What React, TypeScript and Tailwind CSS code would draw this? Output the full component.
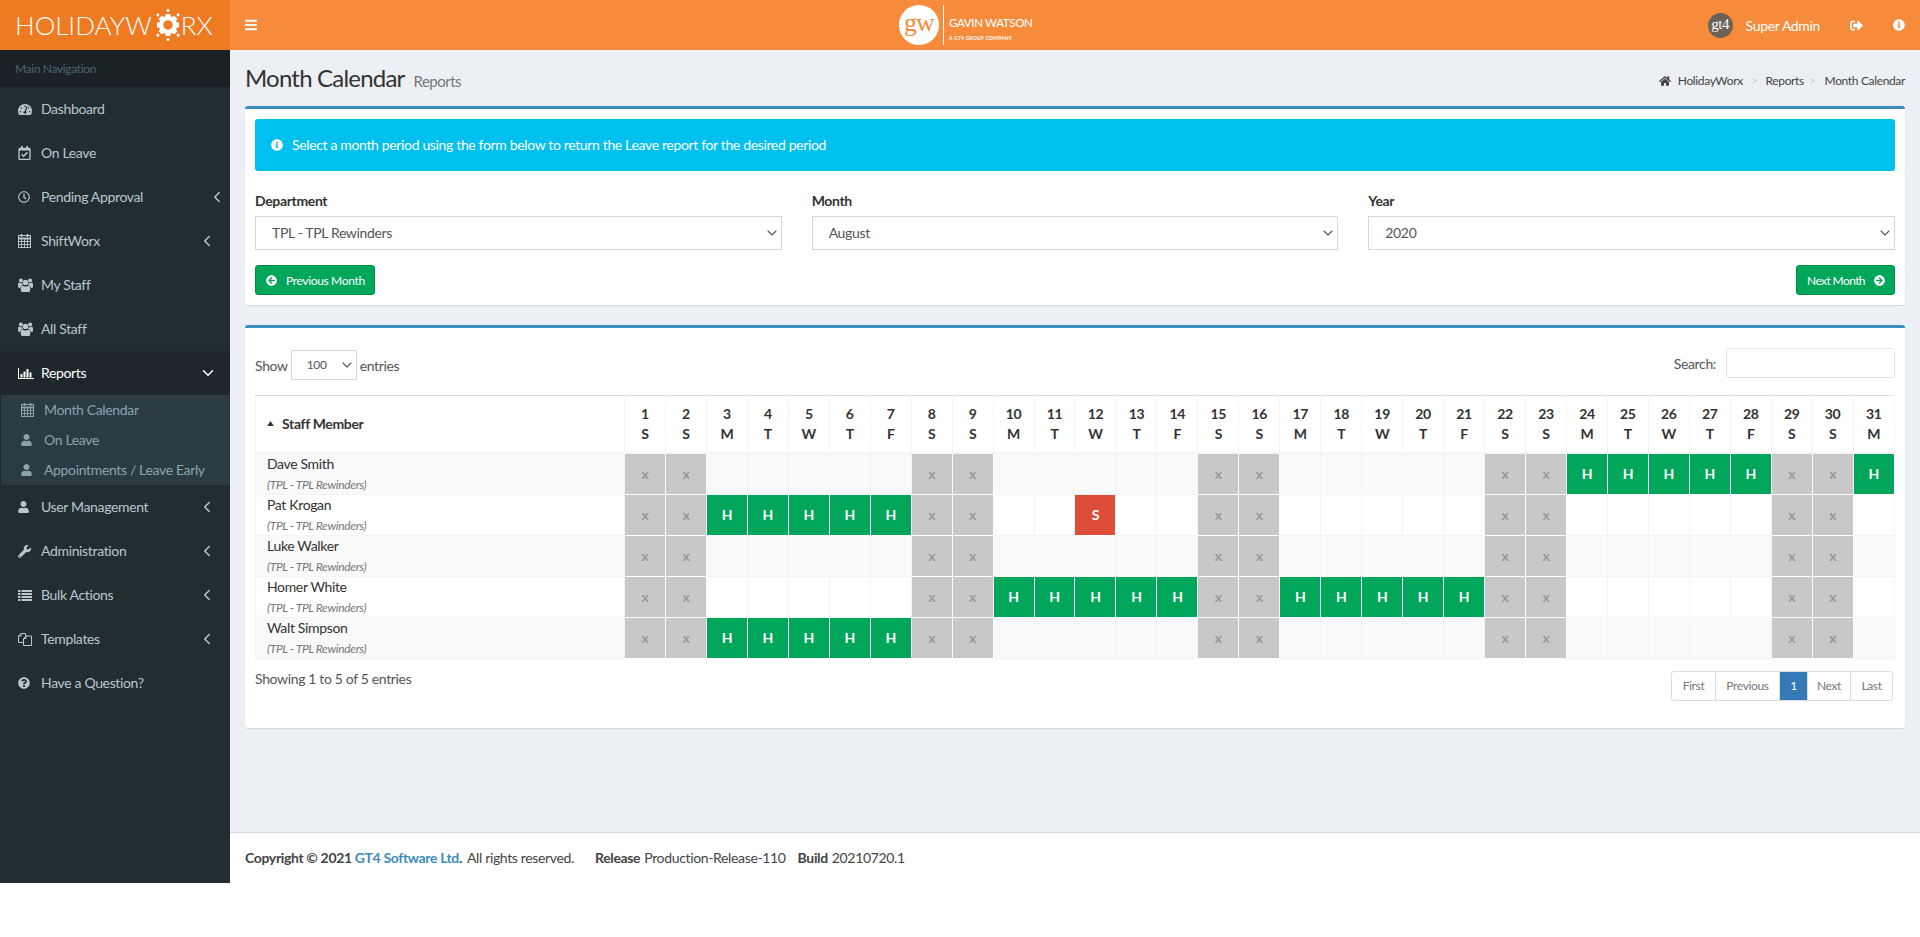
import type { ReactNode } from "react";
import { ChevronDown, ChevronLeft } from "lucide-react";
import {
  FaArrowCircleLeft,
  FaArrowCircleRight,
  FaBars,
  FaHome,
  FaInfoCircle,
  FaQuestionCircle,
  FaRegCalendarCheck,
  FaRegClock,
  FaSignOutAlt,
  FaTachometerAlt,
  FaUser,
  FaWrench,
} from "react-icons/fa";

type NavItem = {
  label: string;
  icon: ReactNode;
  chevronClass?: string;
};

function CalendarIcon() {
  return (
    <svg viewBox="0 0 13 14" className="h-[14px] w-[13px]" fill="none" stroke="currentColor" strokeWidth="1">
      <rect x="0.5" y="1.5" width="12" height="12" />
      <path d="M0 4.5h13" strokeWidth="2" />
      <path d="M0.5 7.5h12M0.5 10.5h12M3.5 5v8M6.5 5v8M9.5 5v8" strokeWidth="0.9" />
      <path d="M3.5 0v3M9.5 0v3" strokeWidth="1.6" />
    </svg>
  );
}

function UsersIcon() {
  return (
    <svg viewBox="0 0 15 14" className="h-[14px] w-[15px]" fill="currentColor">
      <circle cx="7.5" cy="4.4" r="2.7" />
      <circle cx="2.9" cy="2.6" r="2" />
      <circle cx="12.1" cy="2.6" r="2" />
      <path d="M4.4 7.6c1 .7 2 1 3.1 1s2.100-.3 3.100-1c1.300.4 1.700 1.700 1.700 3.800 0 1.600-.9 2.600-2.200 2.600H4.900c-1.300 0-2.200-1-2.200-2.600 0-2.100.4-3.400 1.700-3.800z" />
      <path d="M0 6.800c0-1 .2-1.900 1-2.300.6.5 1.300.7 1.900.7.500 0 .9-.1 1.300-.3.100.7.400 1.300.8 1.800-1.500.5-2.700 1.600-2.900 3.300H1.300C.5 9.700 0 9 0 8.200z" />
      <path d="M15 6.800c0-1-.2-1.900-1-2.300-.6.5-1.300.7-1.900.7-.5 0-.9-.1-1.300-.3-.1.7-.4 1.300-.8 1.800 1.500.5 2.700 1.600 2.900 3.300h.8c.8 0 1.300-.7 1.300-1.500z" />
    </svg>
  );
}

function ChartIcon() {
  return (
    <svg viewBox="0 0 16 11" className="h-[11px] w-[16px]" fill="currentColor">
      <rect x="0" y="0" width="1" height="11" />
      <rect x="0" y="10" width="16" height="1" />
      <rect x="2.500" y="6" width="2" height="3.500" />
      <rect x="5.500" y="3.500" width="2" height="6" />
      <rect x="8.500" y="1" width="2" height="8.500" />
      <rect x="11.500" y="4.500" width="2" height="5" />
    </svg>
  );
}

function ListIcon() {
  return (
    <svg viewBox="0 0 14 11" className="h-[11px] w-[14px]" fill="currentColor">
      {[0, 3, 6, 9].map((y) => (
        <g key={y}>
          <rect x="0" y={y} width="2.500" height="2" />
          <rect x="3.500" y={y} width="10.500" height="2" />
        </g>
      ))}
    </svg>
  );
}

function FilesIcon() {
  return (
    <svg viewBox="0 0 14 13" className="h-[13px] w-[14px]" fill="none" stroke="currentColor" strokeWidth="1">
      <path d="M5.500 9.500H.5V3L3 .5h4.500V3" />
      <path d="M3 .5V3H.5" />
      <path d="M5.500 12.500V5.500L8 3h5.500v9.500z" />
      <path d="M8 3v2.500H5.500" />
    </svg>
  );
}

const topNav: NavItem[] = [
  { label: "Dashboard", icon: <FaTachometerAlt className="h-[13px] w-[14px]" /> },
  { label: "On Leave", icon: <FaRegCalendarCheck className="h-[14px] w-[13px]" /> },
  { label: "Pending Approval", icon: <FaRegClock className="h-[12px] w-[12px]" />, chevronClass: "mr-[4px]" },
  { label: "ShiftWorx", icon: <CalendarIcon />, chevronClass: "mr-[14px]" },
  { label: "My Staff", icon: <UsersIcon /> },
  { label: "All Staff", icon: <UsersIcon /> },
];

const bottomNav: NavItem[] = [
  { label: "User Management", icon: <FaUser className="h-[12px] w-[11px]" />, chevronClass: "mr-[14px]" },
  { label: "Administration", icon: <FaWrench className="h-[13px] w-[13px]" />, chevronClass: "mr-[14px]" },
  { label: "Bulk Actions", icon: <ListIcon />, chevronClass: "mr-[14px]" },
  { label: "Templates", icon: <FilesIcon />, chevronClass: "mr-[14px]" },
  { label: "Have a Question?", icon: <FaQuestionCircle className="h-[12px] w-[12px]" /> },
];

const subNav: { label: string; icon: ReactNode }[] = [
  { label: "Month Calendar", icon: <CalendarIcon /> },
  { label: "On Leave", icon: <FaUser className="h-[12px] w-[11px]" /> },
  { label: "Appointments / Leave Early", icon: <FaUser className="h-[12px] w-[11px]" /> },
];

const weekdays = ["S", "S", "M", "T", "W", "T", "F"];
const days = Array.from({ length: 31 }, (_, i) => ({
  num: i + 1,
  letter: weekdays[i % 7],
  weekend: i % 7 < 2,
}));

const range = (from: number, to: number) => Array.from({ length: to - from + 1 }, (_, i) => from + i);

const staff: { name: string; holidays: number[]; sick: number[] }[] = [
  { name: "Dave Smith", holidays: [...range(24, 28), 31], sick: [] },
  { name: "Pat Krogan", holidays: range(3, 7), sick: [12] },
  { name: "Luke Walker", holidays: [], sick: [] },
  { name: "Homer White", holidays: [...range(10, 14), ...range(17, 21)], sick: [] },
  { name: "Walt Simpson", holidays: range(3, 7), sick: [] },
];

function Logo() {
  const teeth = [0, 45, 90, 135, 180, 225, 270, 315];
  return (
    <div className="flex h-[50px] w-[230px] shrink-0 items-center bg-[#ee7a21] pl-[15px] text-[26px] font-light leading-none tracking-normal text-white">
      <span>HOLIDAYW</span>
      <svg viewBox="0 0 32 32" className="mr-[-3px] h-[32px] w-[32px] shrink-0" fill="white">
        {teeth.map((deg) => (
          <g key={deg} transform={`rotate(${deg} 16 16)`}>
            <rect x="13.5" y="5" width="5" height="5" />
            {deg % 90 !== 0 || deg % 180 === 0 ? <circle cx="16" cy="1.6" r="1.5" /> : null}
          </g>
        ))}
        <circle cx="16" cy="16" r="7" fill="none" stroke="white" strokeWidth="4.5" />
      </svg>
      <span>RX</span>
    </div>
  );
}

function Navbar() {
  return (
    <div className="flex h-[50px] min-w-0 flex-1 items-center bg-[#f68b3b] text-white">
      <FaBars className="ml-[15px] h-[14px] w-[12px]" />
      <div className="ml-[642px] flex items-center">
        <div className="flex h-[40px] w-[40px] items-center justify-center rounded-full bg-white pb-[5px] font-['Liberation_Serif',serif] text-[26px] font-light leading-none tracking-[-1px] text-[#f68b3b]">
          gw
        </div>
        <div className="ml-[4px] h-[40px] w-px bg-white" />
        <div className="ml-[5px] flex h-[40px] flex-col pt-[11px]">
          <span className="text-[11.5px] font-medium uppercase leading-[14px] tracking-[-0.35px]">Gavin Watson</span>
          <span className="mt-[5px] text-[5px] font-bold uppercase leading-[6px] tracking-[0.2px]">A GT4 Group Company</span>
        </div>
      </div>
      <div className="ml-auto flex items-center pr-[15px]">
        <div className="flex h-[25px] w-[25px] items-center justify-center rounded-full bg-[#6b6157] pb-px font-['Liberation_Serif',serif] text-[15px] leading-none tracking-[-0.5px]">
          gt4
        </div>
        <span className="ml-[13px] text-[14px]">Super Admin</span>
        <FaSignOutAlt className="ml-[30px] h-[13px] w-[13px]" />
        <FaInfoCircle className="ml-[30px] h-[12px] w-[12px]" />
      </div>
    </div>
  );
}

function SideLink({ item }: { item: NavItem }) {
  return (
    <a className="flex h-[44px] items-center pl-[18px] text-[14px] text-[#b8c7ce]">
      <span className="flex w-[23px] shrink-0 items-center">{item.icon}</span>
      <span className="pb-[2px]">{item.label}</span>
      {item.chevronClass ? <ChevronLeft className={`ml-auto h-[18px] w-[18px] ${item.chevronClass}`} strokeWidth={2} /> : null}
    </a>
  );
}

function Sidebar() {
  return (
    <aside className="w-[230px] shrink-0 bg-[#222d32]">
      <div className="flex h-[37px] items-center bg-[#1a2226] pl-[15px] text-[12px] text-[#4b646f]">Main Navigation</div>
      {topNav.map((item) => (
        <SideLink key={item.label} item={item} />
      ))}
      <a className="flex h-[44px] items-center bg-[#1e282c] pl-[18px] text-[14px] text-white">
        <span className="flex w-[23px] shrink-0 items-center">
          <ChartIcon />
        </span>
        <span className="pb-[2px]">Reports</span>
        <ChevronDown className="ml-auto mr-[13px] h-[18px] w-[18px]" strokeWidth={2} />
      </a>
      <div className="h-[90px] border-l border-[#1e282c] bg-[#2c3b41]">
        {subNav.map((item) => (
          <a key={item.label} className="flex h-[30px] items-center pl-[20px] text-[14px] text-[#8aa4af]">
            <span className="flex w-[23px] shrink-0 items-center">{item.icon}</span>
            <span className="pb-[1px]">{item.label}</span>
          </a>
        ))}
      </div>
      {bottomNav.map((item) => (
        <SideLink key={item.label} item={item} />
      ))}
    </aside>
  );
}

function Box({ className, children }: { className: string; children: ReactNode }) {
  return (
    <section className={`rounded-[3px] border-t-[3px] border-[#3c8dbc] bg-white shadow-[0_1px_1px_rgba(0,0,0,0.1)] ${className}`}>
      {children}
    </section>
  );
}

function Field({ label, value, options }: { label: string; value: string; options: string[] }) {
  return (
    <div>
      <label className="mb-[5px] block h-[20px] text-[14px] font-bold leading-[20px] text-[#333]">{label}</label>
      <div className="relative">
        <select
          defaultValue={value}
          className="h-[34px] w-full appearance-none border border-[#d2d6de] bg-white pb-[2px] pl-[16px] text-[14px] text-[#555]"
        >
          {options.map((o) => (
            <option key={o}>{o}</option>
          ))}
        </select>
        <ChevronDown className="pointer-events-none absolute right-[2px] top-[9px] h-[16px] w-[16px] text-[#555]" strokeWidth={1.7} />
      </div>
    </div>
  );
}

function FilterBox() {
  return (
    <Box className="h-[199px] px-[10px] pt-[10px]">
      <div className="flex h-[52px] items-center rounded-[3px] bg-[#00c0ef] pl-[16px] text-[14px] text-white">
        <FaInfoCircle className="h-[12px] w-[12px]" />
        <span className="ml-[9px] pb-[2px]">Select a month period using the form below to return the Leave report for the desired period</span>
      </div>
      <div className="mt-[20px] grid grid-cols-3 gap-x-[30px]">
        <Field label="Department" value="TPL - TPL Rewinders" options={["TPL - TPL Rewinders"]} />
        <Field label="Month" value="August" options={["July", "August", "September"]} />
        <Field label="Year" value="2020" options={["2019", "2020", "2021"]} />
      </div>
      <div className="mt-[15px] flex justify-between">
        <button className="flex h-[30px] w-[120px] items-center rounded-[3px] border border-[#008d4c] bg-[#00a65a] pl-[10px] text-[12px] text-white">
          <FaArrowCircleLeft className="h-[11px] w-[11px]" />
          <span className="ml-[9px] pt-px">Previous Month</span>
        </button>
        <button className="flex h-[30px] w-[99px] items-center rounded-[3px] border border-[#008d4c] bg-[#00a65a] pl-[10px] text-[12px] text-white">
          <span className="w-[57px] whitespace-nowrap pt-px tracking-[-0.6px]">Next Month</span>
          <FaArrowCircleRight className="ml-[10px] h-[11px] w-[11px]" />
        </button>
      </div>
    </Box>
  );
}

function DayCell({ day, row }: { day: (typeof days)[number]; row: (typeof staff)[number] }) {
  if (row.holidays.includes(day.num)) {
    return <td className="border border-white bg-[#00a65a] text-center text-[14px] font-bold text-white">H</td>;
  }
  if (row.sick.includes(day.num)) {
    return <td className="border border-white bg-[#dd4b39] text-center text-[14px] font-bold text-white">S</td>;
  }
  if (day.weekend) {
    return <td className="border border-white bg-[#c8c8c8] text-center text-[14px] font-bold text-[#999]">x</td>;
  }
  return <td className="border border-[#f4f4f4]" />;
}

function CalendarTable() {
  return (
    <table className="w-[1640px] table-fixed border-collapse text-[14px] text-[#333]">
      <thead>
        <tr className="h-[57px]">
          <th className="w-[369px] border border-[#f4f4f4] border-t-[#ddd] pl-[11px] text-left font-bold">
            <span className="flex items-center">
              <svg viewBox="0 0 8 6" className="h-[5px] w-[7px]" fill="#333">
                <polygon points="4,0 8,6 0,6" />
              </svg>
              <span className="ml-[8px]">Staff Member</span>
            </span>
          </th>
          {days.map((d) => (
            <th key={d.num} className="border border-[#f4f4f4] border-t-[#ddd] text-center font-bold leading-[20px]">
              {d.num}
              <br />
              {d.letter}
            </th>
          ))}
        </tr>
      </thead>
      <tbody className="border-t-2 border-[#f4f4f4]">
        {staff.map((row, i) => (
          <tr key={row.name} className={i % 2 === 0 ? "h-[41px] bg-[#f9f9f9]" : "h-[41px] bg-white"}>
            <td className="border border-[#f4f4f4] pl-[11px] align-middle">
              <div className="leading-[20px]">{row.name}</div>
              <div className="h-[20px] text-[12px] italic leading-[22px] text-[#777]">(TPL - TPL Rewinders)</div>
            </td>
            {days.map((d) => (
              <DayCell key={d.num} day={d} row={row} />
            ))}
          </tr>
        ))}
      </tbody>
    </table>
  );
}

function Pagination() {
  const pageClass = "flex h-[30px] items-center border border-[#ddd] text-[12px] -ml-px";
  return (
    <div className="flex text-[#777]">
      <a className={`${pageClass} ml-0 w-[45px] justify-center rounded-l-[3px]`}>First</a>
      <a className={`${pageClass} w-[65px] justify-center`}>Previous</a>
      <a className={`${pageClass} w-[29px] justify-center border-[#337ab7] bg-[#337ab7] text-white`}>1</a>
      <a className={`${pageClass} w-[44px] justify-center`}>Next</a>
      <a className={`${pageClass} w-[43px] justify-center rounded-r-[3px]`}>Last</a>
    </div>
  );
}

function ReportBox() {
  return (
    <Box className="mt-[20px] h-[403px] px-[10px] pt-[20px]">
      <div className="flex h-[47px] items-start justify-between text-[14px] text-[#333]">
        <label className="mt-[2px] flex items-center text-[#555]">
          <span>Show</span>
          <div className="relative mx-[3px]">
            <select
              defaultValue="100"
              className="block h-[30px] w-[66px] appearance-none border border-[#d2d6de] bg-white pl-[15px] text-[12px] text-[#555]"
            >
              <option>10</option>
              <option>25</option>
              <option>50</option>
              <option>100</option>
            </select>
            <ChevronDown className="pointer-events-none absolute right-[2px] top-[7px] h-[16px] w-[16px] text-[#555]" strokeWidth={1.7} />
          </div>
          <span>entries</span>
        </label>
        <label className="flex items-center">
          <span className="text-[#555]">Search:</span>
          <input className="ml-[10px] h-[30px] w-[169px] rounded-[3px] border border-[#e4e4e4] bg-white" />
        </label>
      </div>
      <CalendarTable />
      <div className="mt-[12px] flex items-start justify-between pr-[2px] text-[14px] text-[#555]">
        <span className="mt-[-3px]">Showing 1 to 5 of 5 entries</span>
        <Pagination />
      </div>
    </Box>
  );
}

function Breadcrumb() {
  return (
    <ol className="mt-[6px] flex items-center text-[12px] text-[#444]">
      <li className="flex items-center">
        <FaHome className="mr-[7px] h-[12px] w-[12px]" />
        HolidayWorx
      </li>
      <li className="ml-[8px] text-[#ccc]">&gt;</li>
      <li className="ml-[8px]">Reports</li>
      <li className="ml-[5px] text-[#ccc]">&gt;</li>
      <li className="ml-[9px]">Month Calendar</li>
    </ol>
  );
}

export default function App() {
  return (
    <div className="font-['Lato',sans-serif] tracking-[-0.35px]">
      <header className="flex">
        <Logo />
        <Navbar />
      </header>
      <div className="flex h-[833px]">
        <Sidebar />
        <main className="flex min-w-0 flex-1 flex-col">
          <div className="flex-1 bg-[#ecf0f5] px-[15px]">
            <div className="flex h-[56px] items-center justify-between">
              <h1 className="text-[24px] leading-none tracking-[-0.8px] text-[#333]">
                Month Calendar
                <small className="ml-[9px] text-[15px] tracking-[-0.5px] text-[#777]">Reports</small>
              </h1>
              <Breadcrumb />
            </div>
            <FilterBox />
            <ReportBox />
          </div>
          <footer className="flex h-[51px] items-center border-t border-[#d2d6de] bg-white pb-px pl-[15px] text-[14px] text-[#444]">
            <strong>Copyright © 2021 <a className="text-[#3c8dbc]">GT4 Software Ltd</a>.</strong>
            <span className="ml-[5px]">All rights reserved.</span>
            <strong className="ml-[21px]">Release</strong>
            <span className="ml-[4px]">Production-Release-110</span>
            <strong className="ml-[12px]">Build</strong>
            <span className="ml-[4px]">20210720.1</span>
          </footer>
        </main>
      </div>
    </div>
  );
}
